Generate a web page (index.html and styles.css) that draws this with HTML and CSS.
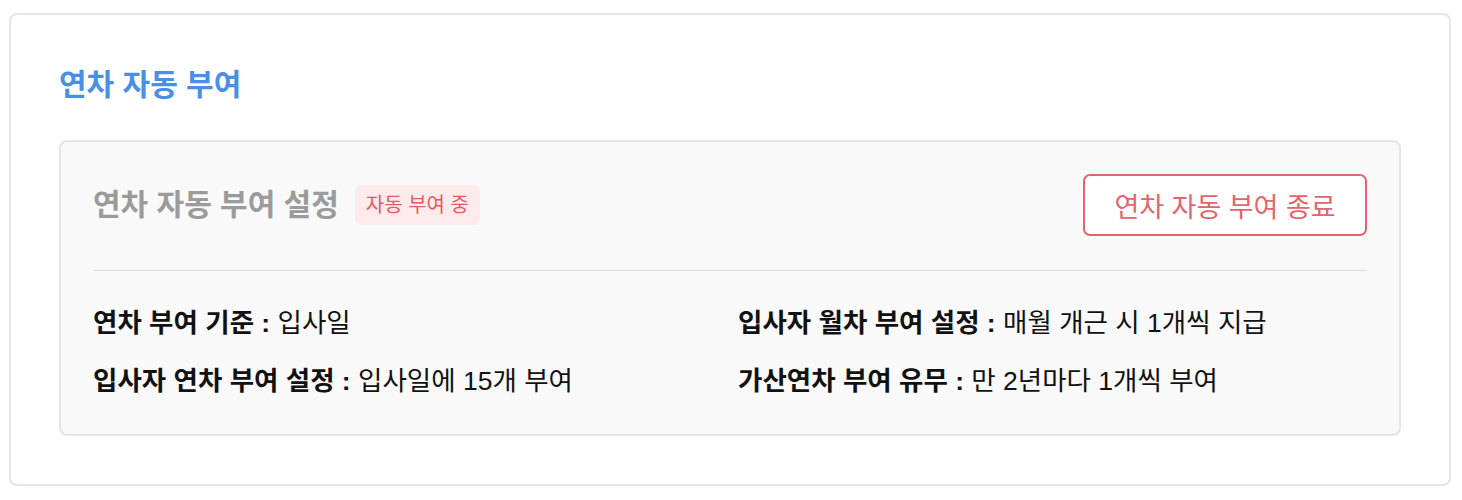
FILE: index.html
```html
<!DOCTYPE html>
<html lang="ko">
<head>
<meta charset="utf-8">
<title>연차 자동 부여</title>
<link rel="stylesheet" href="styles.css">
</head>
<body>
<div class="page">
  <section class="card">
    <h2 class="card-title">연차 자동 부여</h2>
    <div class="panel">
      <div class="panel-head">
        <div class="panel-title-wrap">
          <h3 class="panel-title">연차 자동 부여 설정</h3>
          <span class="badge">자동 부여 중</span>
        </div>
        <button class="btn-end" type="button">연차 자동 부여 종료</button>
      </div>
      <div class="divider"></div>
      <div class="info-grid">
        <div class="info"><b>연차 부여 기준 :</b> 입사일</div>
        <div class="info"><b>입사자 월차 부여 설정 :</b> 매월 개근 시 1개씩 지급</div>
        <div class="info"><b>입사자 연차 부여 설정 :</b> 입사일에 15개 부여</div>
        <div class="info"><b>가산연차 부여 유무 :</b> 만 2년마다 1개씩 부여</div>
      </div>
    </div>
  </section>
</div>
</body>
</html>
```

FILE: styles.css
```css
* { box-sizing: border-box; }
html, body { margin: 0; padding: 0; background: #ffffff; }
body {
  font-family: "Liberation Sans", "Noto Sans CJK KR", sans-serif;
  color: #111;
}
.page {
  padding: 13px 11px 0 9px;
}
.card {
  border: 2px solid #e6e6e6;
  border-radius: 8px;
  padding: 50px 48px 48px 48px;
  background: #fff;
}
.card-title {
  margin: 0 0 35px 0;
  font-size: 30px;
  line-height: 40px;
  font-weight: 700;
  color: #4a8fe6;
}
.panel {
  background: #f9f9f9;
  border: 2px solid #e4e4e4;
  border-radius: 8px;
  padding: 32px 32px 38px 32px;
}
.panel-head {
  display: flex;
  align-items: center;
  justify-content: space-between;
}
.panel-title-wrap {
  display: flex;
  align-items: center;
  gap: 16px;
}
.panel-title {
  margin: 0;
  font-size: 30px;
  line-height: 40px;
  font-weight: 700;
  color: #9b9b9b;
}
.badge {
  display: inline-block;
  height: 40px;
  line-height: 40px;
  padding: 0 11px;
  border-radius: 6px;
  background: #fdeaec;
  color: #e45a64;
  font-size: 20px;
}
.btn-end {
  width: 284px;
  height: 62px;
  border: 2px solid #e5636c;
  border-radius: 7px;
  background: #fff;
  color: #e5636c;
  font-family: inherit;
  font-size: 27px;
  padding: 0;
}
.divider {
  height: 1px;
  background: #dddddd;
  margin: 34px 0 37px 0;
}
.info-grid {
  display: grid;
  grid-template-columns: 1fr 1fr;
  column-gap: 16px;
  row-gap: 28px;
}
.info {
  font-size: 26.5px;
  line-height: 30px;
  color: #111;
  white-space: nowrap;
}
.info b { font-weight: 700; }
```
